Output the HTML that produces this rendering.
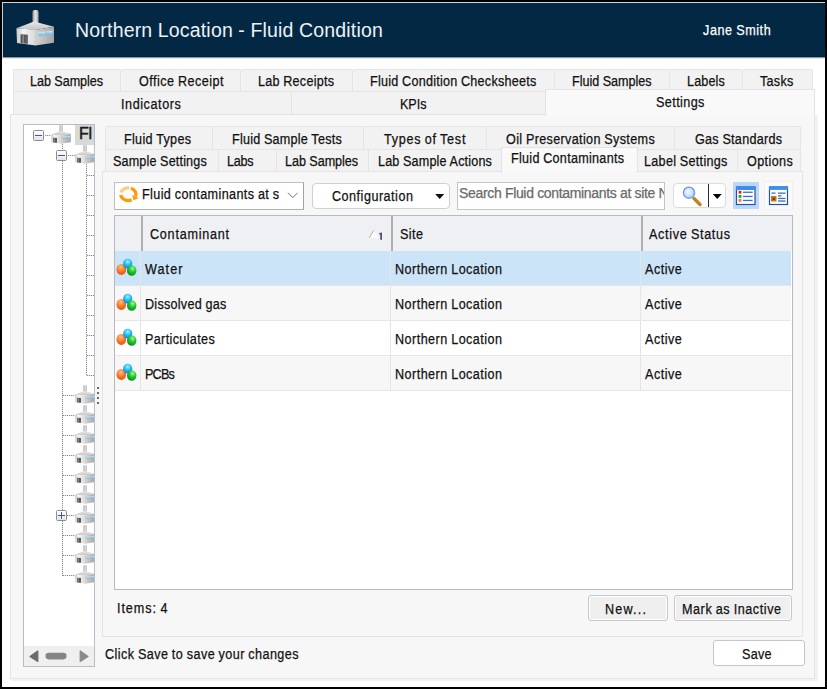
<!DOCTYPE html>
<html><head><meta charset="utf-8"><style>
html,body{margin:0;padding:0;}
body{width:827px;height:689px;background:#000;position:relative;overflow:hidden;font-family:"Liberation Sans",sans-serif;}
div,span,svg{position:absolute;}
span{white-space:nowrap;}
</style></head><body>
<div style="left:2px;top:2px;width:823px;height:685px;background:#ffffff;"></div>
<div style="left:2px;top:2px;width:823px;height:1px;background:#d2d6da;"></div>
<div style="left:3px;top:3px;width:822px;height:53px;background:#022844;"></div>
<div style="left:3px;top:56px;width:822px;height:1px;background:#01213b;"></div>
<div style="left:2px;top:58px;width:823px;height:1px;background:#e6e8ea;"></div>
<div style="left:2px;top:3px;width:1px;height:55px;background:#c9ced3;"></div>
<div style="left:3px;top:57px;width:822px;height:1px;background:#8a9aa8;"></div>
<span style="left:75.10px;top:20.89px;font-size:19.5px;line-height:19.5px;letter-spacing:0.176px;word-spacing:-0.176px;color:#eef2f6;-webkit-text-stroke:0.25px #eef2f6;-webkit-text-stroke:0;">Northern Location - Fluid Condition</span>
<span style="left:702.70px;top:23.15px;font-size:14px;line-height:14px;letter-spacing:0.649px;word-spacing:-0.649px;color:#ffffff;-webkit-text-stroke:0.25px #ffffff;transform:scaleX(0.9);transform-origin:0 0;">Jane Smith</span>
<div style="left:13px;top:69px;width:108px;height:23px;background:#f2f2f2;border:1px solid #e5e5e5;border-radius:1.5px 1.5px 0 0;box-sizing:border-box;"></div>
<div style="left:120px;top:69px;width:121px;height:23px;background:#f2f2f2;border:1px solid #e5e5e5;border-radius:1.5px 1.5px 0 0;box-sizing:border-box;"></div>
<div style="left:240px;top:69px;width:113px;height:23px;background:#f2f2f2;border:1px solid #e5e5e5;border-radius:1.5px 1.5px 0 0;box-sizing:border-box;"></div>
<div style="left:352px;top:69px;width:203px;height:23px;background:#f2f2f2;border:1px solid #e5e5e5;border-radius:1.5px 1.5px 0 0;box-sizing:border-box;"></div>
<div style="left:554px;top:69px;width:116px;height:23px;background:#f2f2f2;border:1px solid #e5e5e5;border-radius:1.5px 1.5px 0 0;box-sizing:border-box;"></div>
<div style="left:669px;top:69px;width:74px;height:23px;background:#f2f2f2;border:1px solid #e5e5e5;border-radius:1.5px 1.5px 0 0;box-sizing:border-box;"></div>
<div style="left:742px;top:69px;width:71px;height:23px;background:#f2f2f2;border:1px solid #e5e5e5;border-radius:1.5px 1.5px 0 0;box-sizing:border-box;"></div>
<span style="left:29.80px;top:73.65px;font-size:14px;line-height:14px;letter-spacing:-0.067px;word-spacing:0.067px;color:#111111;-webkit-text-stroke:0.25px #111111;transform:scaleX(0.9);transform-origin:0 0;">Lab Samples</span>
<span style="left:138.60px;top:73.65px;font-size:14px;line-height:14px;letter-spacing:0.528px;word-spacing:-0.528px;color:#111111;-webkit-text-stroke:0.25px #111111;transform:scaleX(0.9);transform-origin:0 0;">Office Receipt</span>
<span style="left:258.00px;top:73.65px;font-size:14px;line-height:14px;letter-spacing:0.273px;word-spacing:-0.273px;color:#111111;-webkit-text-stroke:0.25px #111111;transform:scaleX(0.9);transform-origin:0 0;">Lab Receipts</span>
<span style="left:370.20px;top:73.65px;font-size:14px;line-height:14px;letter-spacing:0.274px;word-spacing:-0.274px;color:#111111;-webkit-text-stroke:0.25px #111111;transform:scaleX(0.9);transform-origin:0 0;">Fluid Condition Checksheets</span>
<span style="left:572.10px;top:73.65px;font-size:14px;line-height:14px;letter-spacing:-0.034px;word-spacing:0.034px;color:#111111;-webkit-text-stroke:0.25px #111111;transform:scaleX(0.9);transform-origin:0 0;">Fluid Samples</span>
<span style="left:687.00px;top:73.65px;font-size:14px;line-height:14px;letter-spacing:0.148px;word-spacing:-0.148px;color:#111111;-webkit-text-stroke:0.25px #111111;transform:scaleX(0.9);transform-origin:0 0;">Labels</span>
<span style="left:760.10px;top:73.65px;font-size:14px;line-height:14px;letter-spacing:0.304px;word-spacing:-0.304px;color:#111111;-webkit-text-stroke:0.25px #111111;transform:scaleX(0.9);transform-origin:0 0;">Tasks</span>
<div style="left:13px;top:91px;width:279px;height:24px;background:#f2f2f2;border:1px solid #e5e5e5;border-radius:1.5px 1.5px 0 0;box-sizing:border-box;"></div>
<div style="left:291px;top:91px;width:257px;height:24px;background:#f2f2f2;border:1px solid #e5e5e5;border-radius:1.5px 1.5px 0 0;box-sizing:border-box;"></div>
<span style="left:121.00px;top:96.55px;font-size:14px;line-height:14px;letter-spacing:0.639px;word-spacing:-0.639px;color:#111111;-webkit-text-stroke:0.25px #111111;transform:scaleX(0.9);transform-origin:0 0;">Indicators</span>
<span style="left:399.50px;top:96.55px;font-size:14px;line-height:14px;letter-spacing:-0.041px;word-spacing:0.041px;color:#111111;-webkit-text-stroke:0.25px #111111;transform:scaleX(0.9);transform-origin:0 0;">KPIs</span>
<div style="left:10px;top:114px;width:805px;height:565px;background:#f7f7f7;border:1px solid #e4e4e4;box-sizing:border-box;"></div>
<div style="left:815px;top:115px;width:3px;height:566px;background:#f2f2f2;"></div>
<div style="left:11px;top:679px;width:804px;height:2px;background:#f2f2f2;"></div>
<div style="left:545px;top:89px;width:270px;height:27px;background:#f9f9f9;border:1px solid #e3e3e3;border-bottom:none;box-sizing:border-box;"></div>
<span style="left:655.70px;top:94.65px;font-size:14px;line-height:14px;letter-spacing:0.457px;word-spacing:-0.457px;color:#111111;-webkit-text-stroke:0.25px #111111;transform:scaleX(0.9);transform-origin:0 0;">Settings</span>
<div style="left:23px;top:124px;width:72px;height:543px;background:#ffffff;border:1px solid #b9bcc4;box-sizing:border-box;"></div>
<div style="left:24px;top:646px;width:70px;height:20px;background:#efefef;"></div>
<div style="left:102px;top:171px;width:701px;height:466px;background:#f7f7f7;border:1px solid #e4e4e4;box-sizing:border-box;"></div>
<div style="left:105px;top:126px;width:108px;height:24px;background:#f2f2f2;border:1px solid #e5e5e5;border-radius:1.5px 1.5px 0 0;box-sizing:border-box;"></div>
<span style="left:123.90px;top:131.65px;font-size:14px;line-height:14px;letter-spacing:0.346px;word-spacing:-0.346px;color:#111111;-webkit-text-stroke:0.25px #111111;transform:scaleX(0.9);transform-origin:0 0;">Fluid Types</span>
<div style="left:212px;top:126px;width:152px;height:24px;background:#f2f2f2;border:1px solid #e5e5e5;border-radius:1.5px 1.5px 0 0;box-sizing:border-box;"></div>
<span style="left:232.10px;top:131.65px;font-size:14px;line-height:14px;letter-spacing:0.258px;word-spacing:-0.258px;color:#111111;-webkit-text-stroke:0.25px #111111;transform:scaleX(0.9);transform-origin:0 0;">Fluid Sample Tests</span>
<div style="left:363px;top:126px;width:124px;height:24px;background:#f2f2f2;border:1px solid #e5e5e5;border-radius:1.5px 1.5px 0 0;box-sizing:border-box;"></div>
<span style="left:384.10px;top:131.65px;font-size:14px;line-height:14px;letter-spacing:0.821px;word-spacing:-0.821px;color:#111111;-webkit-text-stroke:0.25px #111111;transform:scaleX(0.9);transform-origin:0 0;">Types of Test</span>
<div style="left:486px;top:126px;width:189px;height:24px;background:#f2f2f2;border:1px solid #e5e5e5;border-radius:1.5px 1.5px 0 0;box-sizing:border-box;"></div>
<span style="left:505.90px;top:131.65px;font-size:14px;line-height:14px;letter-spacing:0.384px;word-spacing:-0.384px;color:#111111;-webkit-text-stroke:0.25px #111111;transform:scaleX(0.9);transform-origin:0 0;">Oil Preservation Systems</span>
<div style="left:674px;top:126px;width:127px;height:24px;background:#f2f2f2;border:1px solid #e5e5e5;border-radius:1.5px 1.5px 0 0;box-sizing:border-box;"></div>
<span style="left:694.50px;top:131.65px;font-size:14px;line-height:14px;letter-spacing:0.299px;word-spacing:-0.299px;color:#111111;-webkit-text-stroke:0.25px #111111;transform:scaleX(0.9);transform-origin:0 0;">Gas Standards</span>
<div style="left:105px;top:149px;width:114px;height:23px;background:#f2f2f2;border:1px solid #e5e5e5;border-radius:1.5px 1.5px 0 0;box-sizing:border-box;"></div>
<span style="left:112.60px;top:154.15px;font-size:14px;line-height:14px;letter-spacing:0.166px;word-spacing:-0.166px;color:#111111;-webkit-text-stroke:0.25px #111111;transform:scaleX(0.9);transform-origin:0 0;">Sample Settings</span>
<div style="left:218px;top:149px;width:59px;height:23px;background:#f2f2f2;border:1px solid #e5e5e5;border-radius:1.5px 1.5px 0 0;box-sizing:border-box;"></div>
<span style="left:227.40px;top:154.15px;font-size:14px;line-height:14px;letter-spacing:-0.265px;word-spacing:0.265px;color:#111111;-webkit-text-stroke:0.25px #111111;transform:scaleX(0.9);transform-origin:0 0;">Labs</span>
<div style="left:276px;top:149px;width:93px;height:23px;background:#f2f2f2;border:1px solid #e5e5e5;border-radius:1.5px 1.5px 0 0;box-sizing:border-box;"></div>
<span style="left:284.90px;top:154.15px;font-size:14px;line-height:14px;letter-spacing:-0.067px;word-spacing:0.067px;color:#111111;-webkit-text-stroke:0.25px #111111;transform:scaleX(0.9);transform-origin:0 0;">Lab Samples</span>
<div style="left:368px;top:149px;width:134px;height:23px;background:#f2f2f2;border:1px solid #e5e5e5;border-radius:1.5px 1.5px 0 0;box-sizing:border-box;"></div>
<span style="left:377.60px;top:154.15px;font-size:14px;line-height:14px;letter-spacing:0.187px;word-spacing:-0.187px;color:#111111;-webkit-text-stroke:0.25px #111111;transform:scaleX(0.9);transform-origin:0 0;">Lab Sample Actions</span>
<div style="left:637px;top:149px;width:101px;height:23px;background:#f2f2f2;border:1px solid #e5e5e5;border-radius:1.5px 1.5px 0 0;box-sizing:border-box;"></div>
<span style="left:643.50px;top:154.15px;font-size:14px;line-height:14px;letter-spacing:0.328px;word-spacing:-0.328px;color:#111111;-webkit-text-stroke:0.25px #111111;transform:scaleX(0.9);transform-origin:0 0;">Label Settings</span>
<div style="left:737px;top:149px;width:64px;height:23px;background:#f2f2f2;border:1px solid #e5e5e5;border-radius:1.5px 1.5px 0 0;box-sizing:border-box;"></div>
<span style="left:746.50px;top:154.15px;font-size:14px;line-height:14px;letter-spacing:0.422px;word-spacing:-0.422px;color:#111111;-webkit-text-stroke:0.25px #111111;transform:scaleX(0.9);transform-origin:0 0;">Options</span>
<div style="left:501px;top:147px;width:137px;height:26px;background:#f9f9f9;border:1px solid #e3e3e3;border-bottom:none;box-sizing:border-box;"></div>
<span style="left:510.90px;top:151.35px;font-size:14px;line-height:14px;letter-spacing:0.309px;word-spacing:-0.309px;color:#111111;-webkit-text-stroke:0.25px #111111;transform:scaleX(0.9);transform-origin:0 0;">Fluid Contaminants</span>
<div style="left:114px;top:182px;width:190px;height:28px;background:#ffffff;border:1px solid #bfc0c6;border-right-color:#a4a4a4;border-bottom-color:#b0b0b4;box-sizing:border-box;"></div>
<span style="left:142.30px;top:186.55px;font-size:14px;line-height:14px;letter-spacing:0.435px;word-spacing:-0.435px;color:#111111;-webkit-text-stroke:0.25px #111111;transform:scaleX(0.9);transform-origin:0 0;">Fluid contaminants at s</span>
<div style="left:312px;top:183px;width:138px;height:26px;background:#ffffff;border:1px solid #d0d0d0;border-radius:4px;box-sizing:border-box;"></div>
<span style="left:332.10px;top:189.35px;font-size:14px;line-height:14px;letter-spacing:0.551px;word-spacing:-0.551px;color:#111111;-webkit-text-stroke:0.25px #111111;transform:scaleX(0.9);transform-origin:0 0;">Configuration</span>
<div style="left:457px;top:182px;width:208px;height:28px;background:#ffffff;border:1px solid #c2c4ca;box-sizing:border-box;overflow:hidden;">
<div style="position:absolute;left:0;top:0;width:207px;height:27px;overflow:hidden">
<span style="left:1.00px;top:2.95px;font-size:14px;line-height:14px;letter-spacing:-0.334px;word-spacing:0.000px;color:#6a6a6a;-webkit-text-stroke:0.25px #6a6a6a;">Search Fluid contaminants at site Northern</span>
</div></div>
<div style="left:673px;top:183px;width:53px;height:25px;background:#ffffff;border:1px solid #dcdcdc;border-radius:4px;box-sizing:border-box;"></div>
<div style="left:708px;top:184px;width:1px;height:23px;background:#2a2a36;"></div>
<div style="left:733px;top:182px;width:26px;height:27px;background:#bcd8f7;"></div>
<div style="left:764px;top:181px;width:29px;height:29px;background:#fafafa;border:1px solid #f0f0f0;box-sizing:border-box;"></div>
<div style="left:114px;top:215px;width:679px;height:375px;background:#ffffff;border:1px solid #b6b9c1;box-sizing:border-box;"></div>
<div style="left:115px;top:216px;width:677px;height:35px;background:#eff0f4;"></div>
<div style="left:141px;top:216px;width:2px;height:35px;background:#b0b0b0;"></div>
<div style="left:391px;top:216px;width:2px;height:35px;background:#b0b0b0;"></div>
<div style="left:641px;top:216px;width:2px;height:35px;background:#b0b0b0;"></div>
<div style="left:115px;top:251px;width:676px;height:35px;background:#cce4f7;border-bottom:1px solid #e6e6e6;box-sizing:border-box;"></div>
<div style="left:140px;top:251px;width:1px;height:35px;background:#e2e6ea;"></div>
<div style="left:390px;top:251px;width:1px;height:35px;background:#e2e6ea;"></div>
<div style="left:640px;top:251px;width:1px;height:35px;background:#e2e6ea;"></div>
<div style="left:115px;top:286px;width:676px;height:35px;background:#f7f7f7;border-bottom:1px solid #e6e6e6;box-sizing:border-box;"></div>
<div style="left:140px;top:286px;width:1px;height:35px;background:#e2e6ea;"></div>
<div style="left:390px;top:286px;width:1px;height:35px;background:#e2e6ea;"></div>
<div style="left:640px;top:286px;width:1px;height:35px;background:#e2e6ea;"></div>
<div style="left:115px;top:321px;width:676px;height:35px;background:#ffffff;border-bottom:1px solid #e6e6e6;box-sizing:border-box;"></div>
<div style="left:140px;top:321px;width:1px;height:35px;background:#e2e6ea;"></div>
<div style="left:390px;top:321px;width:1px;height:35px;background:#e2e6ea;"></div>
<div style="left:640px;top:321px;width:1px;height:35px;background:#e2e6ea;"></div>
<div style="left:115px;top:356px;width:676px;height:35px;background:#f7f7f7;border-bottom:1px solid #e6e6e6;box-sizing:border-box;"></div>
<div style="left:140px;top:356px;width:1px;height:35px;background:#e2e6ea;"></div>
<div style="left:390px;top:356px;width:1px;height:35px;background:#e2e6ea;"></div>
<div style="left:640px;top:356px;width:1px;height:35px;background:#e2e6ea;"></div>
<span style="left:149.50px;top:226.95px;font-size:14px;line-height:14px;letter-spacing:0.840px;word-spacing:-0.840px;color:#111111;-webkit-text-stroke:0.25px #111111;transform:scaleX(0.9);transform-origin:0 0;">Contaminant</span>
<span style="left:399.70px;top:226.95px;font-size:14px;line-height:14px;letter-spacing:0.478px;word-spacing:-0.478px;color:#111111;-webkit-text-stroke:0.25px #111111;transform:scaleX(0.9);transform-origin:0 0;">Site</span>
<span style="left:649.00px;top:226.95px;font-size:14px;line-height:14px;letter-spacing:0.754px;word-spacing:-0.754px;color:#111111;-webkit-text-stroke:0.25px #111111;transform:scaleX(0.9);transform-origin:0 0;">Active Status</span>
<span style="left:144.50px;top:262.35px;font-size:14px;line-height:14px;letter-spacing:1.212px;word-spacing:-1.212px;color:#111111;-webkit-text-stroke:0.25px #111111;transform:scaleX(0.9);transform-origin:0 0;">Water</span>
<span style="left:394.70px;top:262.35px;font-size:14px;line-height:14px;letter-spacing:0.507px;word-spacing:-0.507px;color:#111111;-webkit-text-stroke:0.25px #111111;transform:scaleX(0.9);transform-origin:0 0;">Northern Location</span>
<span style="left:645.00px;top:262.35px;font-size:14px;line-height:14px;letter-spacing:0.531px;word-spacing:-0.531px;color:#111111;-webkit-text-stroke:0.25px #111111;transform:scaleX(0.9);transform-origin:0 0;">Active</span>
<span style="left:144.50px;top:297.35px;font-size:14px;line-height:14px;letter-spacing:0.289px;word-spacing:-0.289px;color:#111111;-webkit-text-stroke:0.25px #111111;transform:scaleX(0.9);transform-origin:0 0;">Dissolved gas</span>
<span style="left:394.70px;top:297.35px;font-size:14px;line-height:14px;letter-spacing:0.507px;word-spacing:-0.507px;color:#111111;-webkit-text-stroke:0.25px #111111;transform:scaleX(0.9);transform-origin:0 0;">Northern Location</span>
<span style="left:645.00px;top:297.35px;font-size:14px;line-height:14px;letter-spacing:0.531px;word-spacing:-0.531px;color:#111111;-webkit-text-stroke:0.25px #111111;transform:scaleX(0.9);transform-origin:0 0;">Active</span>
<span style="left:144.50px;top:332.35px;font-size:14px;line-height:14px;letter-spacing:0.390px;word-spacing:-0.390px;color:#111111;-webkit-text-stroke:0.25px #111111;transform:scaleX(0.9);transform-origin:0 0;">Particulates</span>
<span style="left:394.70px;top:332.35px;font-size:14px;line-height:14px;letter-spacing:0.507px;word-spacing:-0.507px;color:#111111;-webkit-text-stroke:0.25px #111111;transform:scaleX(0.9);transform-origin:0 0;">Northern Location</span>
<span style="left:645.00px;top:332.35px;font-size:14px;line-height:14px;letter-spacing:0.531px;word-spacing:-0.531px;color:#111111;-webkit-text-stroke:0.25px #111111;transform:scaleX(0.9);transform-origin:0 0;">Active</span>
<span style="left:144.50px;top:367.35px;font-size:14px;line-height:14px;letter-spacing:-0.891px;word-spacing:0.891px;color:#111111;-webkit-text-stroke:0.25px #111111;transform:scaleX(0.9);transform-origin:0 0;">PCBs</span>
<span style="left:394.70px;top:367.35px;font-size:14px;line-height:14px;letter-spacing:0.507px;word-spacing:-0.507px;color:#111111;-webkit-text-stroke:0.25px #111111;transform:scaleX(0.9);transform-origin:0 0;">Northern Location</span>
<span style="left:645.00px;top:367.35px;font-size:14px;line-height:14px;letter-spacing:0.531px;word-spacing:-0.531px;color:#111111;-webkit-text-stroke:0.25px #111111;transform:scaleX(0.9);transform-origin:0 0;">Active</span>
<span style="left:117.10px;top:600.95px;font-size:14px;line-height:14px;letter-spacing:1.034px;word-spacing:-1.034px;color:#111111;-webkit-text-stroke:0.25px #111111;transform:scaleX(0.9);transform-origin:0 0;">Items: 4</span>
<div style="left:588px;top:595px;width:80px;height:26px;background:#efefef;border:1px solid #c6c6c6;box-shadow:inset 0 0 0 1px #ffffff;border-radius:3px;box-sizing:border-box;"></div>
<span style="left:605.40px;top:601.75px;font-size:14px;line-height:14px;letter-spacing:1.308px;word-spacing:-1.308px;color:#111111;-webkit-text-stroke:0.25px #111111;transform:scaleX(0.9);transform-origin:0 0;">New...</span>
<div style="left:674px;top:595px;width:118px;height:26px;background:#efefef;border:1px solid #c6c6c6;box-shadow:inset 0 0 0 1px #ffffff;border-radius:3px;box-sizing:border-box;"></div>
<span style="left:681.60px;top:601.75px;font-size:14px;line-height:14px;letter-spacing:0.622px;word-spacing:-0.622px;color:#111111;-webkit-text-stroke:0.25px #111111;transform:scaleX(0.9);transform-origin:0 0;">Mark as Inactive</span>
<span style="left:104.60px;top:646.55px;font-size:14px;line-height:14px;letter-spacing:0.476px;word-spacing:-0.476px;color:#111111;-webkit-text-stroke:0.25px #111111;transform:scaleX(0.9);transform-origin:0 0;">Click Save to save your changes</span>
<div style="left:713px;top:640px;width:92px;height:26px;background:#ffffff;border:1px solid #c6c6c6;box-shadow:inset 0 0 0 1px #ffffff;border-radius:3px;box-sizing:border-box;"></div>
<span style="left:742.20px;top:646.95px;font-size:14px;line-height:14px;letter-spacing:0.328px;word-spacing:-0.328px;color:#111111;-webkit-text-stroke:0.25px #111111;transform:scaleX(0.9);transform-origin:0 0;">Save</span>
<div style="left:75px;top:125px;width:19px;height:20px;background:#d9d9d9;"></div>
<div style="left:75px;top:125px;width:19px;height:20px;overflow:hidden">
<span style="left:4.00px;top:1.26px;font-size:16px;line-height:16px;letter-spacing:-0.200px;word-spacing:0.000px;color:#1a1a1a;-webkit-text-stroke:0.25px #1a1a1a;-webkit-text-stroke:0.45px #1a1a1a;">Fl</span>
</div>
<div style="left:45px;top:135px;width:6px;height:1px;background:repeating-linear-gradient(90deg,#8c8c8c 0 1px,#e4e4e4 1px 2px);"></div>
<div style="left:33px;top:130px;width:11px;height:11px;box-sizing:border-box;border:1px solid #8d8d8d;border-radius:1.5px;background:linear-gradient(#ffffff,#e4e4e4);"></div>
<div style="left:35px;top:135px;width:7px;height:1px;background:#3f56b0;"></div>
<div style="left:62px;top:144px;width:1px;height:6px;background:repeating-linear-gradient(180deg,#8c8c8c 0 1px,#e4e4e4 1px 2px);"></div>
<div style="left:56px;top:150px;width:11px;height:11px;box-sizing:border-box;border:1px solid #8d8d8d;border-radius:1.5px;background:linear-gradient(#ffffff,#e4e4e4);"></div>
<div style="left:58px;top:155px;width:7px;height:1px;background:#3f56b0;"></div>
<div style="left:68px;top:155px;width:7px;height:1px;background:repeating-linear-gradient(90deg,#8c8c8c 0 1px,#e4e4e4 1px 2px);"></div>
<div style="left:62px;top:161px;width:1px;height:415px;background:repeating-linear-gradient(180deg,#8c8c8c 0 1px,#e4e4e4 1px 2px);"></div>
<div style="left:63px;top:395px;width:12px;height:1px;background:repeating-linear-gradient(90deg,#8c8c8c 0 1px,#e4e4e4 1px 2px);"></div>
<div style="left:63px;top:415px;width:12px;height:1px;background:repeating-linear-gradient(90deg,#8c8c8c 0 1px,#e4e4e4 1px 2px);"></div>
<div style="left:63px;top:435px;width:12px;height:1px;background:repeating-linear-gradient(90deg,#8c8c8c 0 1px,#e4e4e4 1px 2px);"></div>
<div style="left:63px;top:455px;width:12px;height:1px;background:repeating-linear-gradient(90deg,#8c8c8c 0 1px,#e4e4e4 1px 2px);"></div>
<div style="left:63px;top:475px;width:12px;height:1px;background:repeating-linear-gradient(90deg,#8c8c8c 0 1px,#e4e4e4 1px 2px);"></div>
<div style="left:63px;top:495px;width:12px;height:1px;background:repeating-linear-gradient(90deg,#8c8c8c 0 1px,#e4e4e4 1px 2px);"></div>
<div style="left:63px;top:515px;width:12px;height:1px;background:repeating-linear-gradient(90deg,#8c8c8c 0 1px,#e4e4e4 1px 2px);"></div>
<div style="left:63px;top:535px;width:12px;height:1px;background:repeating-linear-gradient(90deg,#8c8c8c 0 1px,#e4e4e4 1px 2px);"></div>
<div style="left:63px;top:555px;width:12px;height:1px;background:repeating-linear-gradient(90deg,#8c8c8c 0 1px,#e4e4e4 1px 2px);"></div>
<div style="left:63px;top:575px;width:12px;height:1px;background:repeating-linear-gradient(90deg,#8c8c8c 0 1px,#e4e4e4 1px 2px);"></div>
<div style="left:86px;top:164px;width:1px;height:212px;background:repeating-linear-gradient(180deg,#8c8c8c 0 1px,#e4e4e4 1px 2px);"></div>
<div style="left:87px;top:175px;width:7px;height:1px;background:repeating-linear-gradient(90deg,#8c8c8c 0 1px,#e4e4e4 1px 2px);"></div>
<div style="left:87px;top:195px;width:7px;height:1px;background:repeating-linear-gradient(90deg,#8c8c8c 0 1px,#e4e4e4 1px 2px);"></div>
<div style="left:87px;top:215px;width:7px;height:1px;background:repeating-linear-gradient(90deg,#8c8c8c 0 1px,#e4e4e4 1px 2px);"></div>
<div style="left:87px;top:235px;width:7px;height:1px;background:repeating-linear-gradient(90deg,#8c8c8c 0 1px,#e4e4e4 1px 2px);"></div>
<div style="left:87px;top:255px;width:7px;height:1px;background:repeating-linear-gradient(90deg,#8c8c8c 0 1px,#e4e4e4 1px 2px);"></div>
<div style="left:87px;top:275px;width:7px;height:1px;background:repeating-linear-gradient(90deg,#8c8c8c 0 1px,#e4e4e4 1px 2px);"></div>
<div style="left:87px;top:295px;width:7px;height:1px;background:repeating-linear-gradient(90deg,#8c8c8c 0 1px,#e4e4e4 1px 2px);"></div>
<div style="left:87px;top:315px;width:7px;height:1px;background:repeating-linear-gradient(90deg,#8c8c8c 0 1px,#e4e4e4 1px 2px);"></div>
<div style="left:87px;top:335px;width:7px;height:1px;background:repeating-linear-gradient(90deg,#8c8c8c 0 1px,#e4e4e4 1px 2px);"></div>
<div style="left:87px;top:355px;width:7px;height:1px;background:repeating-linear-gradient(90deg,#8c8c8c 0 1px,#e4e4e4 1px 2px);"></div>
<div style="left:87px;top:375px;width:7px;height:1px;background:repeating-linear-gradient(90deg,#8c8c8c 0 1px,#e4e4e4 1px 2px);"></div>
<div style="left:56px;top:510px;width:11px;height:11px;box-sizing:border-box;border:1px solid #8d8d8d;border-radius:1.5px;background:linear-gradient(#ffffff,#e4e4e4);"></div>
<div style="left:58px;top:515px;width:7px;height:1px;background:#3f56b0;"></div>
<div style="left:61px;top:512px;width:1px;height:7px;background:#3f56b0;"></div>
<div style="left:97px;top:387px;width:2px;height:2px;background:#6a6a6a;"></div>
<div style="left:97px;top:392px;width:2px;height:2px;background:#6a6a6a;"></div>
<div style="left:97px;top:397px;width:2px;height:2px;background:#6a6a6a;"></div>
<div style="left:97px;top:402px;width:2px;height:2px;background:#6a6a6a;"></div>
<svg style="left:24px;top:646px;width:70px;height:20px" width="70" height="20"><polygon points="6,10.5 13.8,5 13.8,15.5" fill="#6b6b6b" stroke="#6b6b6b" stroke-width="1.2" stroke-linejoin="round"/><rect x="21.5" y="6.8" width="21" height="6.6" rx="3.3" fill="#858585"/><polygon points="64,10.5 56.2,5 56.2,15.5" fill="#8a8a8a" stroke="#8a8a8a" stroke-width="1.2" stroke-linejoin="round"/></svg>
<svg style="left:0;top:0;width:827px;height:689px;overflow:visible" width="827" height="689"><defs>
<linearGradient id="gch" x1="0" x2="1"><stop offset="0" stop-color="#9a9a9a"/><stop offset="0.5" stop-color="#e4e4e4"/><stop offset="1" stop-color="#a8a8a8"/></linearGradient>
<linearGradient id="gfl" x1="0" x2="1"><stop offset="0" stop-color="#c8c8c8"/><stop offset="0.35" stop-color="#f4f4f4"/><stop offset="1" stop-color="#d8d8d8"/></linearGradient>
<linearGradient id="gfr" x1="0" x2="1"><stop offset="0" stop-color="#d4d4d4"/><stop offset="1" stop-color="#a4a4a4"/></linearGradient>
<linearGradient id="grf" x1="0" x2="0" y1="0" y2="1"><stop offset="0" stop-color="#e8e8e8"/><stop offset="1" stop-color="#c4c4c4"/></linearGradient>
<linearGradient id="gwin" x1="0" x2="0" y1="0" y2="1"><stop offset="0" stop-color="#d8f0ff"/><stop offset="1" stop-color="#5ab4e6"/></linearGradient>
<symbol id="fac" viewBox="15 9 40 38">
<rect x="32.5" y="10" width="6" height="15" rx="2" fill="url(#gch)"/>
<polygon points="16.4,28.2 34,21.5 54,26.8 35.5,30" fill="url(#grf)"/>
<polygon points="16.4,28.2 35.8,29.8 35.8,45.6 17,43.1" fill="url(#gfl)"/>
<polygon points="35.3,30 54,26.8 54,42.7 35.3,45.6" fill="url(#gfr)"/>
<polygon points="20.5,34.3 27.8,34.7 27.8,43.8 20.5,43.2" fill="#555555"/>
<rect x="22.6" y="35.2" width="1.2" height="8.2" fill="#9a9a9a"/><rect x="25.6" y="35.2" width="0.8" height="8.4" fill="#707070"/>
<polygon points="38.5,32.2 45.2,31.4 45.2,35.3 38.5,36.1" fill="url(#gwin)"/>
<polygon points="46.2,31.3 52.6,30.4 52.6,34.3 46.2,35.2" fill="url(#gwin)"/>
</symbol></defs><use href="#fac" x="15" y="9" width="40" height="38"/><clipPath id="tc"><rect x="24" y="125" width="70" height="521"/></clipPath><g clip-path="url(#tc)"><use href="#fac" x="50.3" y="124.5" width="21" height="20"/><use href="#fac" x="74.3" y="144.5" width="21" height="20"/><use href="#fac" x="74.3" y="384.5" width="21" height="20"/><use href="#fac" x="74.3" y="404.5" width="21" height="20"/><use href="#fac" x="74.3" y="424.5" width="21" height="20"/><use href="#fac" x="74.3" y="444.5" width="21" height="20"/><use href="#fac" x="74.3" y="464.5" width="21" height="20"/><use href="#fac" x="74.3" y="484.5" width="21" height="20"/><use href="#fac" x="74.3" y="504.5" width="21" height="20"/><use href="#fac" x="74.3" y="524.5" width="21" height="20"/><use href="#fac" x="74.3" y="544.5" width="21" height="20"/><use href="#fac" x="74.3" y="564.5" width="21" height="20"/></g><g fill="none" stroke="#ff9a0a" stroke-width="3.3"><path d="M 120.96 192.57 A 7.6 6.3 0 0 1 129.36 187.96" stroke-opacity="0.5"/><path d="M 120.77 195.08 A 7.6 6.3 0 0 0 131.63 199.86"/><path d="M 130.90 188.28 A 7.6 6.3 0 0 1 135.35 196.56"/></g><polygon points="132.11,194.98 133.51,200.34 138.58,198.14" fill="#ff9a0a"/><polyline points="288,192.8 292.8,197.6 297.6,192.8" fill="none" stroke="#707070" stroke-width="1"/><polygon points="435.2,194.1 444.2,194.1 439.7,199" fill="#101010"/><defs><radialGradient id="glens" cx="0.4" cy="0.4" r="0.7"><stop offset="0" stop-color="#f4f9ff"/><stop offset="1" stop-color="#a8cdf6"/></radialGradient></defs><line x1="694" y1="198.5" x2="700" y2="204.5" stroke="#c4821a" stroke-width="3.4" stroke-linecap="round"/><circle cx="689" cy="192.7" r="5.6" fill="url(#glens)" stroke="#6b8ff2" stroke-width="1.3"/><polygon points="712.8,194 721.7,194 717.25,199" fill="#000"/><rect x="736.5" y="187" width="18.5" height="17.5" fill="#ffffff" stroke="#2153a8" stroke-width="1.2"/><rect x="736" y="186.6" width="19.5" height="3.4" fill="#3b8ef0"/><rect x="738.6" y="190.79999999999998" width="2.8" height="2.8" fill="#dd1c1c"/><rect x="743" y="191.6" width="9.6" height="1.3" fill="#3a6ec0"/><rect x="738.6" y="195.0" width="2.8" height="2.8" fill="#1aa23a"/><rect x="743" y="195.8" width="9.6" height="1.3" fill="#3a6ec0"/><rect x="738.6" y="199.0" width="2.8" height="2.8" fill="#ff7a10"/><rect x="743" y="199.8" width="9.6" height="1.3" fill="#3a6ec0"/><rect x="769.5" y="187" width="18" height="17.5" fill="#ffffff" stroke="#2153a8" stroke-width="1.2"/><rect x="769" y="186.3" width="19" height="3.6" fill="#3b8ef0"/><rect x="771.5" y="192.5" width="4" height="1.3" fill="#3a6ec0"/><rect x="778" y="192.5" width="7.5" height="1.3" fill="#3a6ec0"/><rect x="778" y="195.2" width="3.5" height="1.3" fill="#3a6ec0"/><rect x="778" y="197.8" width="7.5" height="1.3" fill="#3a6ec0"/><rect x="778" y="200.4" width="7.5" height="1.3" fill="#3a6ec0"/><rect x="771" y="196" width="5.5" height="5.5" fill="#c87418"/><rect x="772.8" y="197.8" width="2" height="2" fill="#5a3a10"/><defs><radialGradient id="gb" cx="0.5" cy="0.3" r="0.7"><stop offset="0" stop-color="#a0f4ff"/><stop offset="0.5" stop-color="#22bcf8"/><stop offset="1" stop-color="#0a84d8"/></radialGradient><radialGradient id="go" cx="0.45" cy="0.3" r="0.75"><stop offset="0" stop-color="#ffc08a"/><stop offset="0.5" stop-color="#ff7a28"/><stop offset="1" stop-color="#e04a0a"/></radialGradient><radialGradient id="gg" cx="0.6" cy="0.3" r="0.75"><stop offset="0" stop-color="#90ff90"/><stop offset="0.5" stop-color="#22c030"/><stop offset="1" stop-color="#068a14"/></radialGradient></defs><ellipse cx="121.3" cy="269.4" rx="4.8" ry="5.5" fill="url(#go)"/><ellipse cx="127.7" cy="263.7" rx="4.6" ry="4.9" fill="url(#gb)"/><ellipse cx="131.7" cy="270.5" rx="4.7" ry="5.3" fill="url(#gg)"/><ellipse cx="121.3" cy="304.4" rx="4.8" ry="5.5" fill="url(#go)"/><ellipse cx="127.7" cy="298.7" rx="4.6" ry="4.9" fill="url(#gb)"/><ellipse cx="131.7" cy="305.5" rx="4.7" ry="5.3" fill="url(#gg)"/><ellipse cx="121.3" cy="339.4" rx="4.8" ry="5.5" fill="url(#go)"/><ellipse cx="127.7" cy="333.7" rx="4.6" ry="4.9" fill="url(#gb)"/><ellipse cx="131.7" cy="340.5" rx="4.7" ry="5.3" fill="url(#gg)"/><ellipse cx="121.3" cy="374.4" rx="4.8" ry="5.5" fill="url(#go)"/><ellipse cx="127.7" cy="368.7" rx="4.6" ry="4.9" fill="url(#gb)"/><ellipse cx="131.7" cy="375.5" rx="4.7" ry="5.3" fill="url(#gg)"/><polygon points="369.3,237.8 373.8,230.4 378.3,237.8" fill="#ffffff" stroke="none"/><line x1="369.3" y1="237.8" x2="373.8" y2="230.4" stroke="#b0b0a8" stroke-width="1"/><rect x="380.4" y="232.6" width="1.4" height="7.2" fill="#3a2050"/><rect x="379.2" y="233.2" width="1.4" height="1.2" fill="#3a2050"/></svg>
</body></html>
